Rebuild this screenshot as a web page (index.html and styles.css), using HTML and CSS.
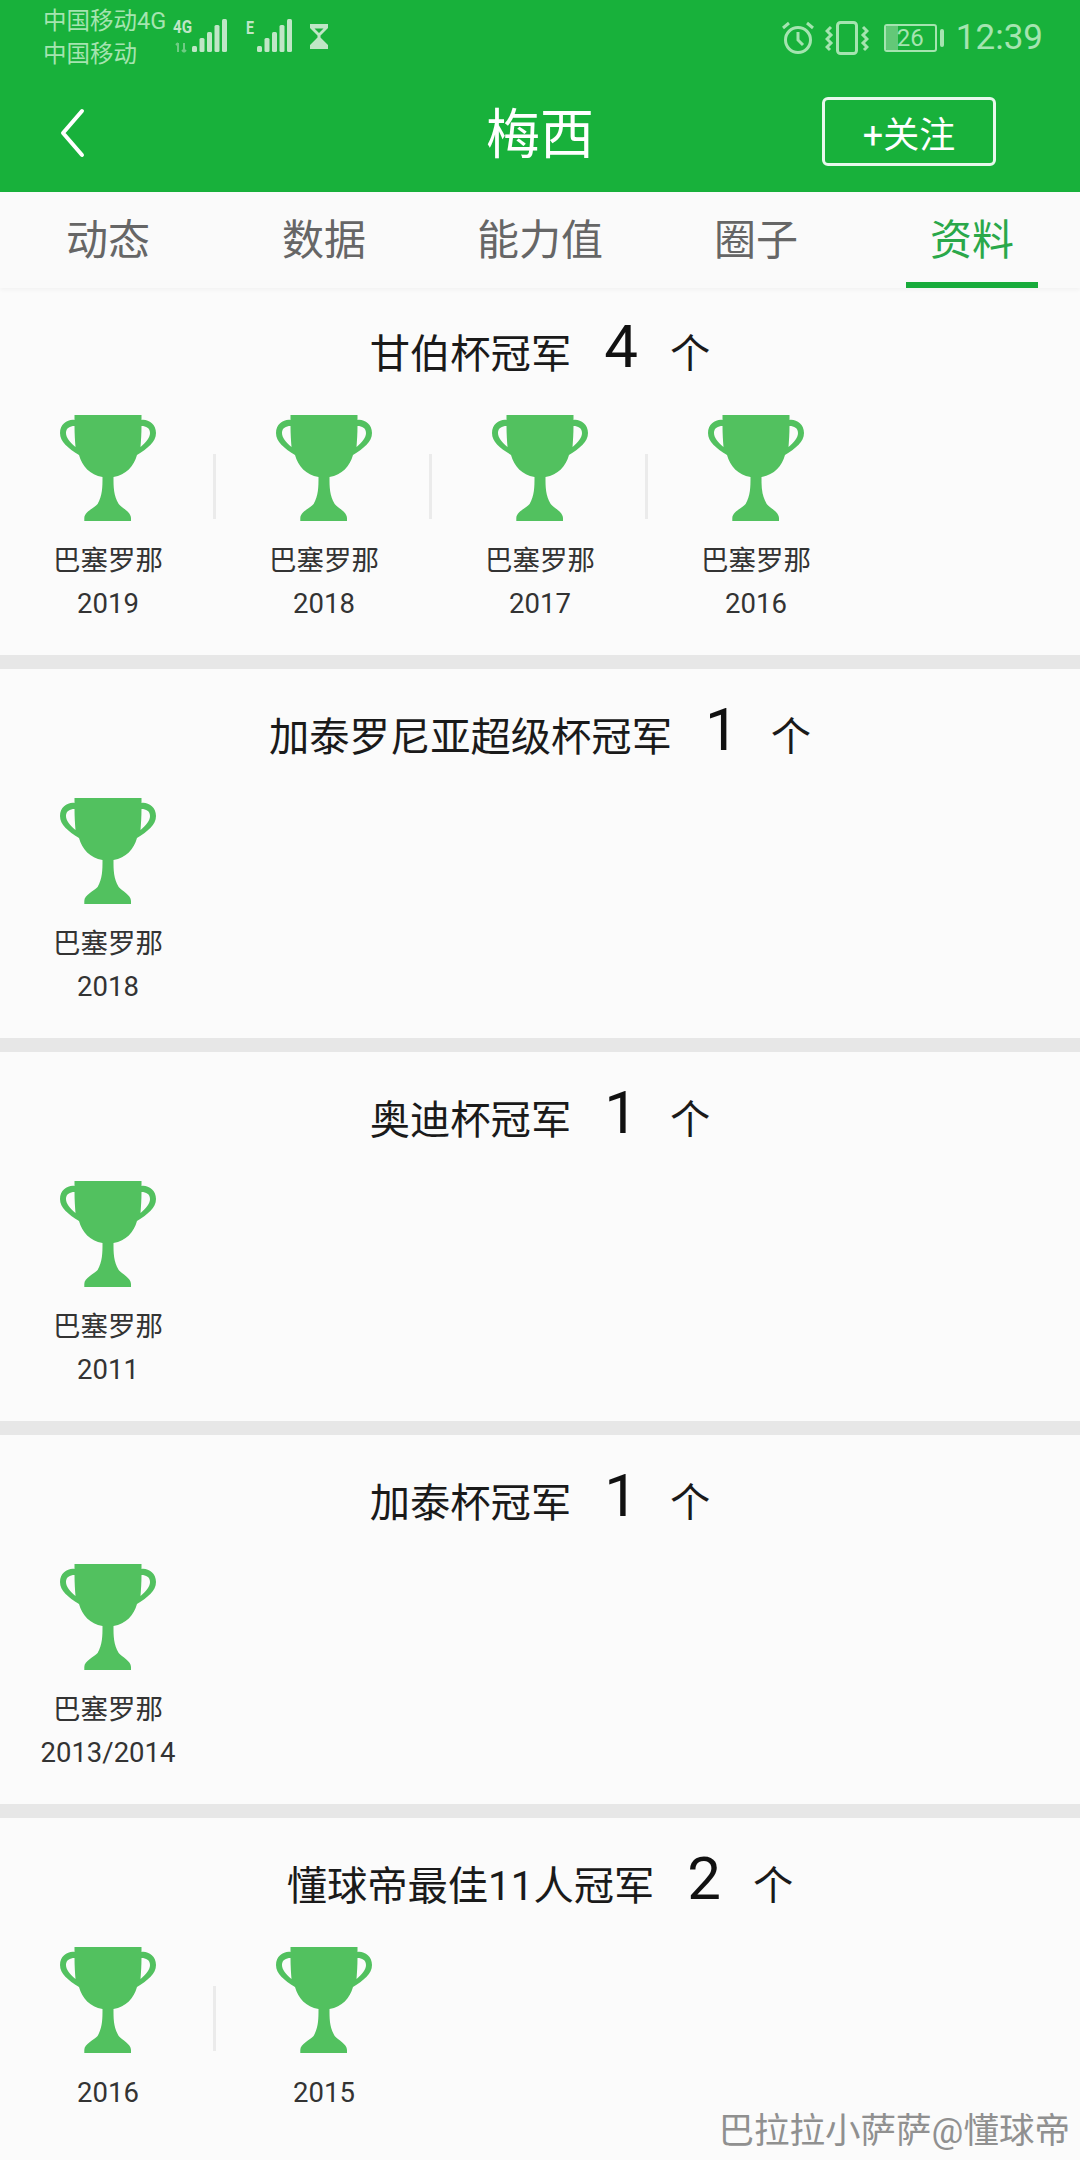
FILE: index.html
```html
<!DOCTYPE html>
<html lang="zh-CN">
<head>
<meta charset="utf-8">
<title>梅西</title>
<link rel="stylesheet" href="styles.css">
</head>
<body>
<svg class="defs" width="0" height="0" aria-hidden="true">
  <symbol id="trophy" viewBox="0 0 96 106">
    <path fill="#52c15f" fill-rule="evenodd" d="M14.500 0H81.500V5C88 4 96 9 96 18C96 27 88 33 77 40C74 51 66 60 53.500 62C53.500 72 53.500 80 58.700 89C62 93 71 97 71 103V106H24.300V103C24.300 97 34 93 37.600 89C42.500 80 42.500 72 42.500 62C30 60 22 51 19 40C8 33 0 27 0 18C0 9 8 4 14.500 5ZM14.500 11C10 11 6 13 6 18C6 23 10 27 15.500 32C15 26 14.500 18 14.500 11ZM81.500 11C86 11 90 13 90 18C90 23 86 27 80.500 32C81 26 81.500 18 81.500 11Z"/>
  </symbol>
</svg>
<div class="page">
  <header class="appbar">
    <div class="status">
      <div class="carriers"><span>中国移动4G</span><span>中国移动</span></div>
      <svg class="sig-a" width="58" height="36" viewBox="0 0 58 36">
        <text x="3" y="15" class="net" textLength="19" lengthAdjust="spacingAndGlyphs">4G</text>
        <path d="M8 25v9M6 27l2-2M14 25v9M12 32l2 2M16 32l-2 2" class="dim"/>
        <g class="bars"><rect x="22" y="28" width="5" height="6" rx="1.500"/><rect x="29.500" y="20" width="5" height="14" rx="1.500"/><rect x="37" y="14" width="5" height="20" rx="1.500"/><rect x="44.500" y="7" width="5" height="27" rx="1.500"/><rect x="52" y="1" width="5" height="33" rx="1.500"/></g>
      </svg>
      <svg class="sig-b" width="50" height="36" viewBox="0 0 50 36">
        <text x="2" y="16" class="net" textLength="8" lengthAdjust="spacingAndGlyphs">E</text>
        <g class="bars"><rect x="13" y="28" width="5" height="6" rx="1.500"/><rect x="20.500" y="20" width="5" height="14" rx="1.500"/><rect x="28" y="14" width="5" height="20" rx="1.500"/><rect x="35.500" y="7" width="5" height="27" rx="1.500"/><rect x="43" y="1" width="5" height="33" rx="1.500"/></g>
      </svg>
      <svg class="glass" width="18" height="25" viewBox="0 0 18 25"><path d="M0 0H18V4L10.500 11.500V13.500L18 21V25H0V21L7.500 13.500V11.500L0 4ZM4.500 4.500L9 9L13.500 4.500Z" fill="#bfe6c6" fill-rule="evenodd"/></svg>
      <div class="status-right">
        <svg width="36" height="36" viewBox="0 0 36 36" fill="none" stroke="#a5e4b0" stroke-width="3"><circle cx="18" cy="20" r="12.500"/><path d="M18 12v8l5 5M3 8l6-5M33 8l-6-5"/></svg>
        <svg class="vib" width="44" height="34" viewBox="0 0 44 34" fill="none" stroke="#a5e4b0" stroke-width="3"><rect x="12.500" y="1.500" width="19" height="31" rx="3"/><path d="M6 6L2 10L6 14L2 18L6 22L2 26L5 29M38 6L42 10L38 14L42 18L38 22L42 26L39 29"/></svg>
        <div class="battery"><div class="level"></div><span>26</span></div>
        <div class="nub"></div>
        <span class="time">12:39</span>
      </div>
    </div>
    <div class="titlebar">
      <svg class="back" width="26" height="50" viewBox="0 0 26 50" fill="none" stroke="#fff" stroke-width="4" stroke-linecap="round" stroke-linejoin="round"><path d="M22 3L3 25L22 47"/></svg>
      <h1>梅西</h1>
      <button class="follow">+关注</button>
    </div>
  </header>

  <nav class="tabs">
    <div class="tab">动态</div>
    <div class="tab">数据</div>
    <div class="tab">能力值</div>
    <div class="tab">圈子</div>
    <div class="tab active">资料</div>
  </nav>

  <section class="group">
    <h2>甘伯杯冠军<b>4</b>个</h2>
    <div class="items">
      <div class="item"><svg class="cup"><use href="#trophy"/></svg><p>巴塞罗那</p><p>2019</p></div>
      <div class="item"><svg class="cup"><use href="#trophy"/></svg><p>巴塞罗那</p><p>2018</p></div>
      <div class="item"><svg class="cup"><use href="#trophy"/></svg><p>巴塞罗那</p><p>2017</p></div>
      <div class="item"><svg class="cup"><use href="#trophy"/></svg><p>巴塞罗那</p><p>2016</p></div>
    </div>
  </section>

  <section class="group">
    <h2>加泰罗尼亚超级杯冠军<b>1</b>个</h2>
    <div class="items">
      <div class="item"><svg class="cup"><use href="#trophy"/></svg><p>巴塞罗那</p><p>2018</p></div>
    </div>
  </section>

  <section class="group">
    <h2>奥迪杯冠军<b>1</b>个</h2>
    <div class="items">
      <div class="item"><svg class="cup"><use href="#trophy"/></svg><p>巴塞罗那</p><p>2011</p></div>
    </div>
  </section>

  <section class="group">
    <h2>加泰杯冠军<b>1</b>个</h2>
    <div class="items">
      <div class="item"><svg class="cup"><use href="#trophy"/></svg><p>巴塞罗那</p><p>2013/2014</p></div>
    </div>
  </section>

  <section class="group">
    <h2>懂球帝最佳11人冠军<b>2</b>个</h2>
    <div class="items">
      <div class="item"><svg class="cup"><use href="#trophy"/></svg><p>2016</p></div>
      <div class="item"><svg class="cup"><use href="#trophy"/></svg><p>2015</p></div>
    </div>
  </section>

  <div class="watermark">巴拉拉小萨萨@懂球帝</div>
</div>
</body>
</html>
```

FILE: styles.css
```css
* { box-sizing: border-box; }
html, body { margin: 0; padding: 0; }
body {
  width: 1080px;
  height: 2160px;
  overflow: hidden;
  background: #fafafa;
  font-family: Roboto, "Noto Sans CJK SC", sans-serif;
}
.defs { position: absolute; }
.page { position: relative; width: 1080px; height: 2160px; overflow: hidden; }

.appbar { height: 192px; background: #18b13b; color: #fff; }
.status { height: 68px; padding: 0 0 0 43px; display: flex; align-items: flex-start; color: #a5e4b0; }
.carriers { display: flex; flex-direction: column; flex: none; width: 127px; padding-top: 5px; font-size: 23.500px; line-height: 33px; white-space: nowrap; }
.sig-a { margin: 18px 0 0 0; }
.sig-b { margin: 18px 0 0 16px; }
.glass { margin: 24px 0 0 16px; }
.net { font: 700 18px Roboto, sans-serif; fill: #bfe6c6; }
.dim { stroke: #6fcb84; stroke-width: 2; fill: none; }
.bars rect { fill: #bfe6c6; }
.status-right { margin-left: auto; padding: 19px 37px 0 0; display: flex; align-items: center; height: 56px; }
.vib { margin-left: 9px; }
.battery { position: relative; margin-left: 15px; width: 53px; height: 28px; border: 2px solid #a5e4b0; border-radius: 3px; display: flex; align-items: center; justify-content: center; font-size: 24px; overflow: hidden; }
.battery span { position: relative; }
.level { position: absolute; left: 0; top: 0; bottom: 0; width: 12px; background: #63c878; }
.nub { width: 4px; height: 18px; margin-left: 3px; border-radius: 2px; background: #a5e4b0; }
.time { margin-left: 12px; font-size: 35px; line-height: 40px; }

.titlebar { position: relative; height: 124px; display: flex; align-items: center; justify-content: center; }
.back { position: absolute; left: 60px; top: 40px; }
h1 { margin: 0; padding-top: 12px; font-size: 54px; font-weight: 400; line-height: 60px; }
.follow {
  position: absolute; left: 822px; top: 29px; width: 174px; height: 69px;
  background: transparent; border: 3px solid #e8f8ec; border-radius: 6px;
  color: #fff; font: 400 36px Roboto, "Noto Sans CJK SC", sans-serif; padding: 0;
}

.tabs { height: 96px; margin-bottom: -2px; display: grid; grid-template-columns: repeat(5, 216px); background: #fafafa; box-shadow: 0 2px 4px rgba(0, 0, 0, 0.040); position: relative; z-index: 1; }
.tab { display: flex; justify-content: center; padding-top: 24px; font-size: 42px; line-height: 50px; color: #666; position: relative; }
.tab.active { color: #2aa84a; }
.tab.active::after { content: ""; position: absolute; left: 42px; right: 42px; bottom: 0; height: 6px; background: #18ab3b; }

.group { height: 383px; padding-top: 30px; background: #fbfbfb; border-bottom: 14px solid #e7e7e7; }
h2 { margin: 0; height: 68px; display: flex; justify-content: center; align-items: center; font-size: 40.300px; font-weight: 400; color: #1a1a1a; }
h2 b { font-size: 60px; font-weight: 400; color: #111; margin: -6px 32px 0 33px; line-height: 60px; }
.items { display: flex; padding-top: 31px; }
.item { position: relative; width: 216px; display: flex; flex-direction: column; align-items: center; }
.item + .item::before { content: ""; position: absolute; left: -3px; top: 39px; width: 3px; height: 65px; background: #ebebeb; }
.cup { width: 96px; height: 106px; display: block; margin-bottom: 18px; }
.item p { margin: 0; font-size: 27.500px; line-height: 43px; color: #333; white-space: nowrap; }

.watermark { position: absolute; right: 10px; bottom: 7px; font-size: 35.500px; line-height: 44px; color: #909090; }
```
